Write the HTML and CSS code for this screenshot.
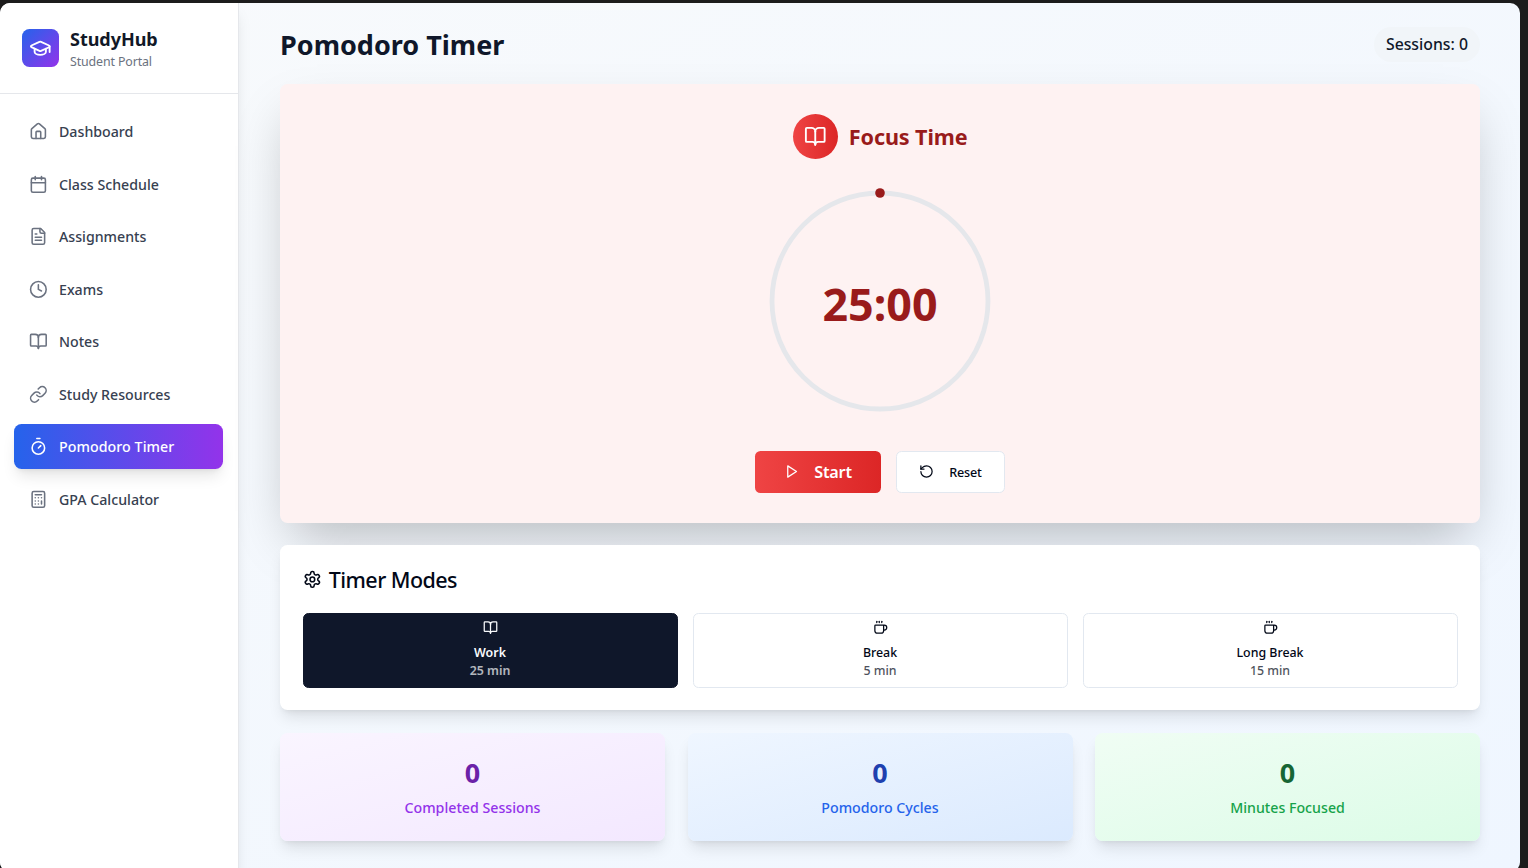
FILE: index.html
```html
<!DOCTYPE html>
<html lang="en">
<head>
<meta charset="utf-8">
<title>StudyHub - Pomodoro Timer</title>
<link rel="stylesheet" href="styles.css">
</head>
<body>
<svg class="defs" aria-hidden="true">
  <symbol id="book-open" viewBox="0 0 24 24"><path d="M12 7v14"/><path d="M3 18a1 1 0 0 1-1-1V4a1 1 0 0 1 1-1h5a4 4 0 0 1 4 4 4 4 0 0 1 4-4h5a1 1 0 0 1 1 1v13a1 1 0 0 1-1 1h-6a3 3 0 0 0-3 3 3 3 0 0 0-3-3z"/></symbol>
  <symbol id="coffee" viewBox="0 0 24 24"><path d="M10 2v2"/><path d="M14 2v2"/><path d="M6 2v2"/><path d="M16 8a1 1 0 0 1 1 1v8a4 4 0 0 1-4 4H7a4 4 0 0 1-4-4V9a1 1 0 0 1 1-1h14a4 4 0 1 1 0 8h-1"/></symbol>
</svg>
<div class="app">
  <aside class="sidebar">
    <div class="brand">
      <div class="brand-logo"><svg class="icon" viewBox="0 0 24 24"><path d="M21.42 10.922a1 1 0 0 0-.019-1.838L12.83 5.18a2 2 0 0 0-1.66 0L2.6 9.08a1 1 0 0 0 0 1.832l8.57 3.908a2 2 0 0 0 1.66 0z"/><path d="M22 10v6"/><path d="M6 12.5V16a6 3 0 0 0 12 0v-3.5"/></svg></div>
      <div>
        <div class="brand-name">StudyHub</div>
        <div class="brand-sub">Student Portal</div>
      </div>
    </div>
    <nav class="nav">
      <a class="nav-item"><svg class="icon" viewBox="0 0 24 24"><path d="M15 21v-8a1 1 0 0 0-1-1h-4a1 1 0 0 0-1 1v8"/><path d="M3 10a2 2 0 0 1 .709-1.528l7-5.999a2 2 0 0 1 2.582 0l7 5.999A2 2 0 0 1 21 10v9a2 2 0 0 1-2 2H5a2 2 0 0 1-2-2z"/></svg><span>Dashboard</span></a>
      <a class="nav-item"><svg class="icon" viewBox="0 0 24 24"><path d="M8 2v4"/><path d="M16 2v4"/><rect width="18" height="18" x="3" y="4" rx="2"/><path d="M3 10h18"/></svg><span>Class Schedule</span></a>
      <a class="nav-item"><svg class="icon" viewBox="0 0 24 24"><path d="M15 2H6a2 2 0 0 0-2 2v16a2 2 0 0 0 2 2h12a2 2 0 0 0 2-2V7Z"/><path d="M14 2v4a2 2 0 0 0 2 2h4"/><path d="M10 9H8"/><path d="M16 13H8"/><path d="M16 17H8"/></svg><span>Assignments</span></a>
      <a class="nav-item"><svg class="icon" viewBox="0 0 24 24"><circle cx="12" cy="12" r="10"/><path d="M12 6v6l4 2"/></svg><span>Exams</span></a>
      <a class="nav-item"><svg class="icon"><use href="#book-open"/></svg><span>Notes</span></a>
      <a class="nav-item"><svg class="icon" viewBox="0 0 24 24"><path d="M10 13a5 5 0 0 0 7.54.54l3-3a5 5 0 0 0-7.07-7.07l-1.72 1.71"/><path d="M14 11a5 5 0 0 0-7.54-.54l-3 3a5 5 0 0 0 7.07 7.07l1.71-1.71"/></svg><span>Study Resources</span></a>
      <a class="nav-item active"><svg class="icon" viewBox="0 0 24 24"><path d="M10 2h4"/><path d="M12 14l3-3"/><circle cx="12" cy="14" r="8"/></svg><span>Pomodoro Timer</span></a>
      <a class="nav-item"><svg class="icon" viewBox="0 0 24 24"><rect width="16" height="20" x="4" y="2" rx="2"/><path d="M8 6h8"/><path d="M16 14v4"/><path d="M16 10h.01"/><path d="M12 10h.01"/><path d="M8 10h.01"/><path d="M12 14h.01"/><path d="M8 14h.01"/><path d="M12 18h.01"/><path d="M8 18h.01"/></svg><span>GPA Calculator</span></a>
    </nav>
  </aside>
  <main class="main">
    <header class="page-head">
      <h1 class="title">Pomodoro Timer</h1>
      <span class="badge">Sessions: 0</span>
    </header>
    <section class="timer-card">
      <div class="timer-head">
        <div class="timer-icon"><svg class="icon"><use href="#book-open"/></svg></div>
        <h2 class="timer-title">Focus Time</h2>
      </div>
      <div class="ring">
        <svg class="ring-svg" viewBox="0 0 100 100"><circle cx="50" cy="50" r="45" fill="none" stroke="#e5e7eb" stroke-width="2"/><circle cx="50" cy="5" r="2" fill="#991b1b"/></svg>
        <div class="time">25:00</div>
      </div>
      <div class="controls">
        <button class="btn start"><svg class="icon" viewBox="0 0 24 24"><path d="M6 3l14 9-14 9z"/></svg><span>Start</span></button>
        <button class="btn reset"><svg class="icon" viewBox="0 0 24 24"><path d="M3 12a9 9 0 1 0 9-9 9.75 9.75 0 0 0-6.74 2.74L3 8"/><path d="M3 3v5h5"/></svg><span>Reset</span></button>
      </div>
    </section>
    <section class="modes-card">
      <h3 class="modes-title"><svg class="icon" viewBox="0 0 24 24"><path d="M12.22 2h-.44a2 2 0 0 0-2 2v.18a2 2 0 0 1-1 1.73l-.43.25a2 2 0 0 1-2 0l-.15-.08a2 2 0 0 0-2.73.73l-.22.38a2 2 0 0 0 .73 2.73l.15.1a2 2 0 0 1 1 1.72v.51a2 2 0 0 1-1 1.74l-.15.09a2 2 0 0 0-.73 2.73l.22.38a2 2 0 0 0 2.73.73l.15-.08a2 2 0 0 1 2 0l.43.25a2 2 0 0 1 1 1.73V20a2 2 0 0 0 2 2h.44a2 2 0 0 0 2-2v-.18a2 2 0 0 1 1-1.73l.43-.25a2 2 0 0 1 2 0l.15.08a2 2 0 0 0 2.73-.73l.22-.39a2 2 0 0 0-.73-2.73l-.15-.08a2 2 0 0 1-1-1.74v-.5a2 2 0 0 1 1-1.74l.15-.09a2 2 0 0 0 .73-2.73l-.22-.38a2 2 0 0 0-2.73-.73l-.15.08a2 2 0 0 1-2 0l-.43-.25a2 2 0 0 1-1-1.73V4a2 2 0 0 0-2-2z"/><circle cx="12" cy="12" r="3"/></svg><span>Timer Modes</span></h3>
      <div class="modes">
        <button class="mode selected"><svg class="icon"><use href="#book-open"/></svg><span class="mode-name">Work</span><span class="mode-min">25 min</span></button>
        <button class="mode"><svg class="icon"><use href="#coffee"/></svg><span class="mode-name">Break</span><span class="mode-min">5 min</span></button>
        <button class="mode"><svg class="icon"><use href="#coffee"/></svg><span class="mode-name">Long Break</span><span class="mode-min">15 min</span></button>
      </div>
    </section>
    <section class="stats">
      <div class="stat purple"><div class="stat-value">0</div><div class="stat-label">Completed Sessions</div></div>
      <div class="stat blue"><div class="stat-value">0</div><div class="stat-label">Pomodoro Cycles</div></div>
      <div class="stat green"><div class="stat-value">0</div><div class="stat-label">Minutes Focused</div></div>
    </section>
  </main>
</div>
</body>
</html>
```
FILE: styles.css
```css
* { box-sizing: border-box; margin: 0; padding: 0; }
html { font-size: 15px; }
body { height: 868px; overflow: hidden; background: #1c1c1c; padding-top: 3px; font-family: "Noto Sans", "Open Sans", sans-serif; color: #020817; }
button { font-family: inherit; cursor: pointer; }
.defs { display: none; }
.icon { width: 15px; height: 15px; fill: none; stroke: currentColor; stroke-width: 2; stroke-linecap: round; stroke-linejoin: round; flex: none; }
.app { display: flex; width: 1520px; height: 869px; border-radius: 10px; overflow: hidden; background: linear-gradient(to bottom right, #f8fafc, #eff6ff); }

.sidebar { width: 239px; background: #fff; border-right: 1px solid #e5e7eb; box-shadow: 0 10px 15px -3px rgba(0,0,0,.1), 0 4px 6px -4px rgba(0,0,0,.1); }
.brand { display: flex; align-items: center; gap: 11px; height: 91px; padding: 0 22px; border-bottom: 1px solid #e5e7eb; }
.brand-logo { display: flex; align-items: center; justify-content: center; width: 37px; height: 37.5px; border-radius: 7.5px; color: #fff; background: linear-gradient(to bottom right, #2563eb, #9333ea); }
.brand-logo .icon { width: 22.5px; height: 22.5px; }
.brand-name { font-size: 18px; line-height: 26px; font-weight: 700; color: #111827; letter-spacing: -.03px; }
.brand-sub { padding-top: 1px; font-size: 12.4px; line-height: 18px; color: #6b7280; letter-spacing: -.12px; }
.nav { display: flex; flex-direction: column; gap: 7.5px; padding: 15px 15px 0 14px; }
.nav-item { display: flex; align-items: center; gap: 11.25px; height: 45px; padding: 0 15px; border-radius: 7.5px; color: #374151; font-size: 14.2px; font-weight: 500; }
.nav-item .icon { width: 18.75px; height: 18.75px; color: #6b7280; }
.nav-item.active { color: #fff; background: linear-gradient(90deg, #2563eb, #9333ea); box-shadow: 0 10px 15px -3px rgba(0,0,0,.1), 0 4px 6px -4px rgba(0,0,0,.1); letter-spacing: .07px; }
.nav-item.active .icon { color: #fff; }

.main { display: flex; flex-direction: column; flex: 1; gap: 22px; padding: 23px 40px 0 41px; }
.page-head { display: flex; align-items: center; justify-content: space-between; height: 36px; }
.title { padding-top: 2px; font-size: 27px; line-height: 36px; font-weight: 700; color: #0f172a; }
.badge { display: flex; align-items: center; height: 35px; padding: 0 12px; border-radius: 18px; background: #f1f5f9; color: #0f172a; font-size: 15.8px; font-weight: 500; }

.timer-card { display: flex; flex-direction: column; align-items: center; height: 439px; padding: 30px; border-radius: 7.5px; background: #fef2f2; box-shadow: 0 25px 50px -12px rgba(0,0,0,.25); }
.timer-head { display: flex; align-items: center; gap: 11.25px; margin-bottom: 22px; }
.timer-icon { display: flex; align-items: center; justify-content: center; width: 45px; height: 45px; border-radius: 50%; color: #fff; background: linear-gradient(90deg, #ef4444, #dc2626); }
.timer-icon .icon { width: 22.5px; height: 22.5px; }
.timer-title { font-size: 21.6px; line-height: 30px; font-weight: 700; color: #991b1b; letter-spacing: -.12px; }
.ring { display: grid; place-items: center; width: 240px; height: 240px; margin-bottom: 30px; }
.ring > * { grid-area: 1 / 1; }
.ring-svg { width: 240px; height: 240px; }
.time { padding-top: 5px; font-size: 44.8px; line-height: 48px; font-weight: 700; color: #991b1b; }
.controls { display: flex; gap: 15px; }
.btn { display: flex; align-items: center; justify-content: center; height: 42px; border-radius: 5.5px; }
.btn .icon { margin-bottom: 2px; }
.start { width: 126px; gap: 15px; border: 0; color: #fff; background: linear-gradient(90deg, #ef4444, #dc2626); font-size: 16.2px; font-weight: 600; letter-spacing: -.2px; }
.reset { width: 109px; gap: 15px; border: 1px solid #e2e8f0; background: #fff; color: #020817; font-size: 12.6px; font-weight: 500; letter-spacing: -.2px; }

.modes-card { height: 165px; padding: 22.5px; border-radius: 7.5px; background: #fff; box-shadow: 0 10px 15px -3px rgba(0,0,0,.1), 0 4px 6px -4px rgba(0,0,0,.1); }
.modes-title { display: flex; align-items: center; gap: 7.5px; height: 23px; margin-bottom: 22.5px; font-size: 21.5px; font-weight: 500; letter-spacing: -.55px; }
.modes-title span { padding-top: 1px; }
.modes-title .icon { width: 18.75px; height: 18.75px; }
.modes { display: grid; grid-template-columns: repeat(3, 1fr); gap: 15px; }
.mode { display: flex; flex-direction: column; align-items: center; height: 75px; padding-top: 6px; border: 1px solid #e2e8f0; border-radius: 5.5px; background: #fff; color: #020817; font-size: 12.4px; font-weight: 500; }
.mode .icon { margin-bottom: 8px; }
.mode-name { line-height: 19px; }
.mode-min { line-height: 18px; opacity: .7; }
.mode.selected { color: #f8fafc; background: #0f172a; border-color: #0f172a; font-weight: 600; }

.stats { display: grid; grid-template-columns: repeat(3, 1fr); gap: 22.5px; padding-top: 1px; }
.stat { height: 108px; padding-top: 22.5px; border-radius: 7.5px; text-align: center; box-shadow: 0 10px 15px -3px rgba(0,0,0,.1), 0 4px 6px -4px rgba(0,0,0,.1); }
.stat-value { font-size: 27px; line-height: 34px; font-weight: 700; }
.stat-label { margin-top: 7.5px; font-size: 14.2px; line-height: 21px; font-weight: 500; }
.purple { background: linear-gradient(to bottom right, #faf5ff, #f3e8ff); color: #6b21a8; }
.purple .stat-label { color: #9333ea; }
.blue { background: linear-gradient(to bottom right, #eff6ff, #dbeafe); color: #1e40af; }
.blue .stat-label { color: #2563eb; }
.green { background: linear-gradient(to bottom right, #f0fdf4, #dcfce7); color: #166534; }
.green .stat-label { color: #16a34a; }
```
